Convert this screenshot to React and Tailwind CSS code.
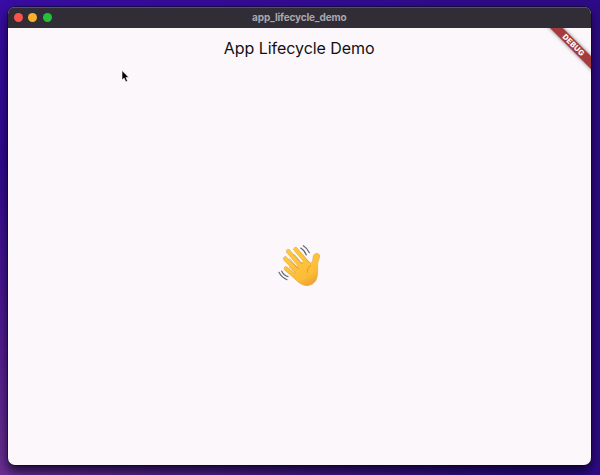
function WavingHand() {
  return (
    <svg className="h-[60px] w-[60px]" viewBox="0 0 180 180" fill="none" strokeLinecap="round" strokeLinejoin="round" role="img" aria-label="Waving hand">
      <defs>
        <linearGradient id="skin" x1="55" y1="40" x2="120" y2="155" gradientUnits="userSpaceOnUse">
          <stop offset="0" stopColor="#fecb43" />
          <stop offset="0.75" stopColor="#fcbc38" />
          <stop offset="1" stopColor="#ee9f2c" />
        </linearGradient>
      </defs>
      <g stroke="#dfa040" strokeWidth="13">
        <path d="M77 43 L114 86" />
        <path d="M55 49 L96 98" />
        <path d="M46 71 L88 115" />
        <path d="M48 101 L82 130" />
      </g>
      <path d="M84 86 L108 78 Q118 87 124 83 Q129 79 129 66 Q132 54 142 55 Q151 58 149 67 Q142 82 143 96 Q145 122 138 136 Q129 151 112 152 Q97 152 83 140 L72 126 Z" fill="url(#skin)" stroke="#dfa040" strokeWidth="1.5" />
      <g stroke="url(#skin)" strokeWidth="11">
        <path d="M77 43 L116 91" />
        <path d="M55 49 L99 103" />
        <path d="M46 71 L90 117" />
        <path d="M48 101 L82 130" />
      </g>
      <g stroke="#d8922e" strokeWidth="2.5">
        <path d="M73 59 L96 86" />
        <path d="M59 72 L85 101" />
        <path d="M58 96 L76 113" />
        <path d="M122 91 Q111 98 112 112" />
      </g>
      <g stroke="#626a72" strokeWidth="3.5">
        <path d="M100 32 Q113 40 118 53" />
        <path d="M92 39 Q105 47 109 60" />
        <path d="M35 108 Q40 121 54 125" />
        <path d="M27 112 Q34 127 51 134" />
      </g>
    </svg>
  );
}

function TitleBar() {
  return (
    <header className="relative flex h-[21px] shrink-0 items-center justify-center border-t border-[#56515f] bg-[#302d36]">
      <div className="absolute left-[5.5px] top-[4.5px] flex gap-[5.5px]">
        <span className="size-[9px] rounded-full bg-[#fa544d]" />
        <span className="size-[9px] rounded-full bg-[#f9b12b]" />
        <span className="size-[9px] rounded-full bg-[#25c138]" />
      </div>
      <span className="-translate-y-px font-['Inter',sans-serif] text-[10px] font-bold leading-none tracking-[-0.15px] text-[#aaa6ae]">app_lifecycle_demo</span>
    </header>
  );
}

export default function App() {
  return (
    <div className="h-[475px] w-[600px] overflow-hidden bg-[linear-gradient(90deg,transparent_0%,#2e0b86_85%),linear-gradient(180deg,#390ca4_0%,#320b91_35%,#4d1990_65%,#6c3090_100%)] pl-[8px] pt-[7px]">
      <main className="relative flex h-[458px] w-[582.5px] flex-col overflow-hidden rounded-[7px] bg-[#fcf7fb] shadow-[0_0_0_0.5px_#09051c,0_6px_12px_#080020dd]">
        <TitleBar />
        <section className="relative flex flex-1 flex-col overflow-hidden">
          <h1 className="pt-[10px] text-center font-['Inter',sans-serif] text-[16px] font-normal leading-[20px] tracking-[-0.05px] text-[#121014]">App Lifecycle Demo</h1>
          <div className="absolute left-[262px] top-[207px]"><WavingHand /></div>
          <div className="absolute left-[525px] top-[12px] flex h-[8.5px] w-[80px] rotate-45 items-center justify-center bg-[#a63b3e] pl-[2px] font-['Inter',sans-serif] text-[7.5px] font-extrabold leading-none tracking-[0.3px] text-white shadow-[0_0_4px_#0008]">DEBUG</div>
          <svg className="absolute left-[113px] top-[42px] h-[13px] w-[9px]" viewBox="0 0 9 13">
            <path d="M1 .5 V10 L3.1 8 L4.8 11.8 L6.5 11 L4.9 7.4 H7.8 Z" fill="#000" stroke="#fff" strokeWidth=".6" />
          </svg>
        </section>
      </main>
    </div>
  );
}
